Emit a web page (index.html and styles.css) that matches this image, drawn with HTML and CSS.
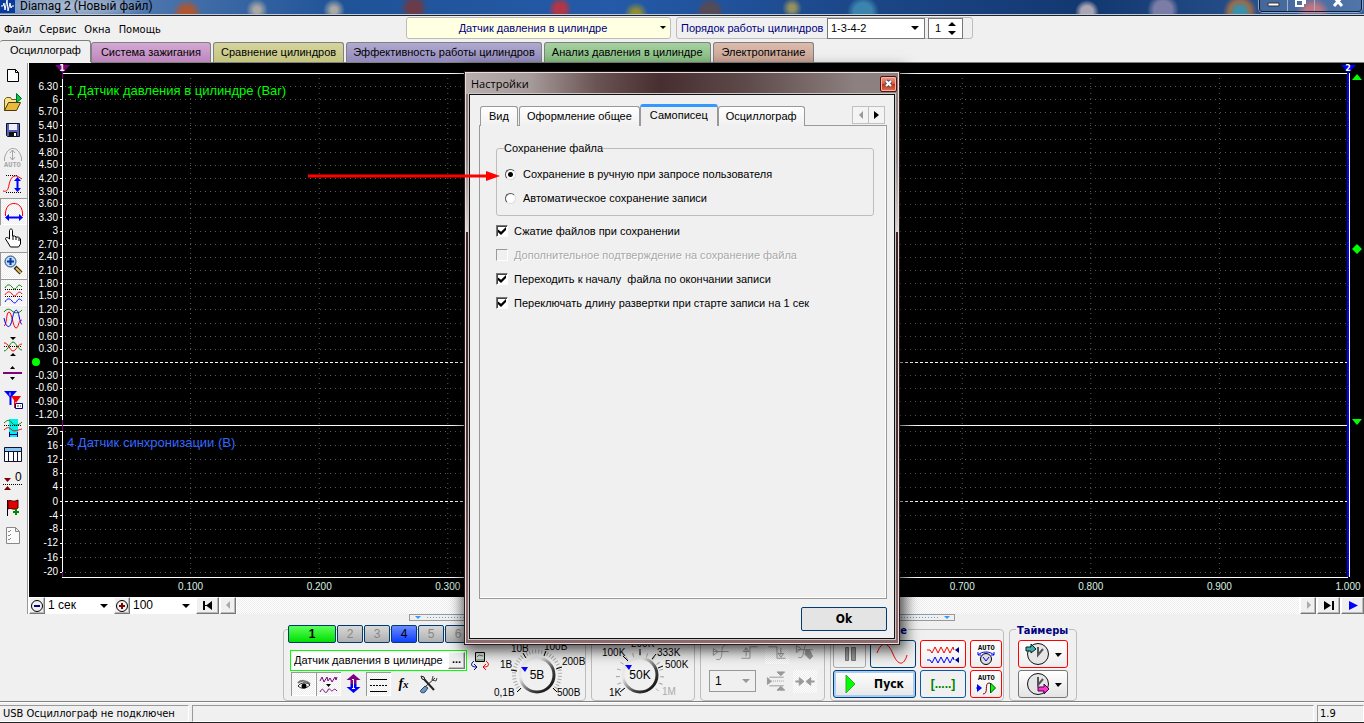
FILE: index.html
```html
<!DOCTYPE html>
<html lang="ru">
<head>
<meta charset="utf-8">
<title>Diamag 2 (Новый файл)</title>
<link rel="stylesheet" href="styles.css">
</head>
<body>
<div class="app">
  <header class="titlebar">
    <svg class="app-icon" width="15" height="13" viewBox="0 0 15 13"><rect width="15" height="13" fill="#0a3a9a"/><path d="M1 6h2l1-3 1 7 2-10 1 11 2-8 1 5 1-2h2" fill="none" stroke="#fff"/></svg>
    <span class="title-text">Diamag 2 (Новый файл)</span>
    <div class="window-buttons">
      <button aria-label="Свернуть"><svg width="26" height="11"><path d="M8 3h11v3H8z" fill="#fff" stroke="#333"/></svg></button>
      <button aria-label="Развернуть"><svg width="26" height="11"><path d="M8 0h7v6H8zM17 0v4" fill="none" stroke="#fff" stroke-width="2"/></svg></button>
      <button aria-label="Закрыть" class="wide"><svg width="46" height="11"><path d="M19-3l8 9M27-3l-8 9" stroke="#fff" stroke-width="3"/></svg></button>
    </div>
  </header>

  <div class="menubar">
    <nav class="menu">
      <button>Файл</button><button>Сервис</button><button>Окна</button><button>Помощь</button>
    </nav>
    <span class="combo sensor"><select aria-label="Датчик"><option>Датчик давления в цилиндре</option></select></span>
    <div class="order">
      <label for="order">Порядок работы цилиндров</label>
      <span class="combo order-combo"><select id="order"><option>1-3-4-2</option></select></span>
      <span class="spin"><input type="text" value="1" aria-label="Цилиндр"></span>
    </div>
  </div>

  <div class="tabs">
    <button class="tab current">Осциллограф</button>
    <button class="tab violet">Система зажигания</button>
    <button class="tab olive">Сравнение цилиндров</button>
    <button class="tab indigo">Эффективность работы цилиндров</button>
    <button class="tab green">Анализ давления в цилиндре</button>
    <button class="tab rose">Электропитание</button>
  </div>

  <main class="main">
    <div class="tools">
      <button aria-label="Новый"><svg viewBox="0 0 27 27"><path d="M7.500 6.500h8l3 3v9h-11z" fill="#fff" stroke="#000"/><path d="M15.500 6.500v3h3" fill="none" stroke="#000"/></svg></button>
      <button aria-label="Открыть"><svg viewBox="0 0 27 27"><path d="M4.500 20.500V9.500l2-2h4l1 2h6v3" fill="#f3e48a" stroke="#6b5a10"/><path d="M4.500 20.500l4-8h12l-4 8z" fill="#e8b93c" stroke="#4a3b00"/><path d="M16.500 3.500l5 5-5 4z" fill="#0c4" stroke="#063"/></svg></button>
      <button aria-label="Сохранить"><svg viewBox="0 0 27 27"><path d="M6.500 6.500h13v13h-12l-1-1z" fill="#5560b8" stroke="#112"/><path d="M9 7h8v6H9z" fill="#eef"/><path d="M9 15h8v4H9z" fill="#111"/><path d="M14 16h2v3h-2z" fill="#fff"/></svg></button>
      <button aria-label="Авто"><svg viewBox="0 0 27 27"><path d="M4.500 17v-3C6 8 9 4.500 13 4.500S20 8 21.500 14v3M12.500 6v10M10 9l2.500-3L15 9M10 13l2.500 3 2.500-3" fill="none" stroke="#a5a5a5"/><text x="4" y="23" class="tiny" fill="#a5a5a5">AUTO</text></svg></button>
      <button aria-label="Масштаб по вертикали"><svg viewBox="0 0 27 27"><path d="M6 4.500h12M6 21.500h15" stroke="#000" stroke-dasharray="1 1"/><path d="M3 20c4 1 5-1 6-6s3-10 8-9l5 3" fill="none" stroke="#f00"/><path d="M17.500 8v10" stroke="#00f" stroke-width="2"/><path d="M14 10l3.500-4 3.500 4zM14 17l3.500 4 3.500-4z" fill="#00f"/></svg></button>
      <button class="pressed" aria-label="Масштаб по горизонтали"><svg viewBox="0 0 27 27"><path d="M5.500 18v-3C6 9 9 5.500 14 5.500S22 9 22.500 15v3" fill="none" stroke="#f00"/><path d="M8 19.500h12" stroke="#00f" stroke-width="2"/><path d="M9 16l-4 3.500L9 23zM19 16l4 3.500-4 3.500z" fill="#00f"/></svg></button>
      <button aria-label="Рука"><svg viewBox="0 0 27 27"><path d="M9.500 14V5.500c0-2 3-2 3 0V11l2 0 2 1 2 0 2 2v5l-2 3h-8l-3-5-2-3c0-2 2-2 4 0zM13 11v4M16 12v3M19 13v3" fill="#fff" stroke="#000"/></svg></button>
      <button class="pressed" aria-label="Лупа"><svg viewBox="0 0 27 27"><path d="M15 15l6 6" stroke="#222" stroke-width="4"/><path d="M16 16l5 5" stroke="#f0c040" stroke-width="2"/><circle cx="10.500" cy="9.500" r="5.500" fill="#b7ddff" stroke="#246"/><path d="M7 9.500h7M10.500 6v7" stroke="#1030a0" stroke-width="2"/></svg></button>
      <button class="pressed" aria-label="Все каналы"><svg viewBox="0 0 27 27"><path d="M5 9c2-4 5-4 7-1s4 2 5 0 3-3 5 0" fill="none" stroke="#008000"/><path d="M5 10.500h18M5 17.500h18" stroke="#000" stroke-dasharray="1 1"/><path d="M5 16c2-4 5-4 7-1s4 2 5 0 3-3 5 0" fill="none" stroke="#f00"/><path d="M5 23c2-4 5-4 7-1s4 2 5 0 3-3 5 0" fill="none" stroke="#00f"/></svg></button>
      <button aria-label="Наложение"><svg viewBox="0 0 27 27"><path d="M4 6c3-4 6-3 8-1s7 3 10-1" fill="none" stroke="#008000"/><path d="M4 20c3-1 2-14 5-14s4 16 7 16 2-8 6-8" fill="none" stroke="#f00"/><path d="M4 12c2 10 6 12 8 2s5-14 7-4 3 8 3 8" fill="none" stroke="#00f"/></svg></button>
      <button aria-label="Симметрия"><svg viewBox="0 0 27 27"><path d="M4 13.500h18" stroke="#000" stroke-dasharray="1 1"/><path d="M4 10c4-1 6 8 9 8s5-7 9-7" fill="none" stroke="#f00"/><path d="M4 18c4 0 6-9 9-9s5 8 9 8" fill="none" stroke="#080"/><path d="M10 4h6l-3 3zM10 23h6l-3-3z"/></svg></button>
      <button aria-label="Разделитель"><svg viewBox="0 0 27 27"><path d="M3 13h19" stroke="#800080" stroke-width="2"/><path d="M10 9h5l-2.500-3zM10 17h5l-2.500 3z"/></svg></button>
      <button aria-label="Маркеры"><svg viewBox="0 0 27 27"><path d="M4 4h13l-6.500 7z" fill="#00f"/><path d="M10.500 6v12" stroke="#00f" stroke-width="2"/><path d="M10 5.500v3" stroke="#fff"/><path d="M11 9h10l-5 7z" fill="#f00"/><path d="M14.500 12v9" stroke="#f00"/><path d="M15.500 16.500h7v5h-7z" fill="#fff" stroke="#008"/><path d="M17 19h2M20 19h1" stroke="#333"/></svg></button>
      <button aria-label="Участок"><svg viewBox="0 0 27 27"><path d="M9 5h9v18H9z" fill="#0ee"/><path d="M4 9c4-4 6-3 8 0s6 3 10-1" fill="none" stroke="#080"/><path d="M4 11.500h18" stroke="#000" stroke-dasharray="1 1"/><path d="M4 16c4-4 6-2 8 0s6 0 10-1" fill="none" stroke="#f00"/><path d="M9 20.500h9M9.500 18v5M17.500 18v5" stroke="#000080"/></svg></button>
      <button aria-label="Таблица"><svg viewBox="0 0 27 27"><path d="M4.500 6.500h17v14h-17z" fill="#fff" stroke="#113"/><path d="M5 7h16v3H5z" fill="#8bc8f0"/><path d="M4 10.500h18M8.500 10v10M13.500 10v10M17.500 10v10" stroke="#113"/></svg></button>
      <button aria-label="Ноль"><svg viewBox="0 0 27 27"><path d="M3 16.500h19" stroke="#000" stroke-dasharray="1 1"/><path d="M4 10h7l-3.500 4zM4 22h7L7.500 18z" fill="#800000"/><text x="15" y="13" class="zero">0</text></svg></button>
      <button aria-label="Флаг"><svg viewBox="0 0 27 27"><path d="M7.500 5v16" stroke="#000"/><path d="M8 6c3-2 4 2 10-1v8c-5 3-7-1-10 1z" fill="#e00000" stroke="#400"/><path d="M13 17h6M16 14v6" stroke="#080" stroke-width="2"/></svg></button>
      <button aria-label="Отчёт"><svg viewBox="0 0 27 27"><path d="M6.500 5.500h9l4 4v12h-13zM15.500 5.500v4h4" fill="#fafafa" stroke="#888"/><path d="M8 9l1 1 2-2M8 13l1 1 2-2M8 17l1 1 2-2" fill="none" stroke="#888"/></svg></button>
    </div>
    <div class="scope">
      <svg class="chart" id="chart" role="img" aria-label="Осциллограмма"></svg>
      <div class="scroll">
        <button class="raised" aria-label="Уменьшить"><svg width="14" height="14"><circle cx="7" cy="7" r="5.500" fill="none" stroke="#000"/><path d="M4 7h6" stroke="#000080" stroke-width="2"/></svg></button>
        <span class="combo sweep"><select aria-label="Развертка"><option>1 сек</option></select></span>
        <button class="raised" aria-label="Увеличить"><svg width="14" height="14"><circle cx="7" cy="7" r="5.500" fill="none" stroke="#000"/><path d="M4 7h6M7 4v6" stroke="#800000" stroke-width="2"/></svg></button>
        <span class="combo zoomlevel"><select aria-label="Масштаб"><option>100</option></select></span>
        <button class="raised mid" aria-label="В начало"><svg width="12" height="9"><path d="M1 0h2v9H1zM10 0v9L4 4.500zM3 4h5v1H3z"/></svg></button>
        <button class="raised" aria-label="Назад"><svg width="7" height="9"><path d="M5 0v8L1 4z" fill="#aaa"/></svg></button>
        <span class="track"></span>
        <button class="raised" aria-label="Вперёд"><svg width="7" height="9"><path d="M2 0v8l4-4z" fill="#aaa"/></svg></button>
        <button class="raised mid" aria-label="В конец"><svg width="12" height="9"><path d="M9 0h2v9H9zM1 0v9l7-4.500z"/></svg></button>
        <button class="raised mid" aria-label="Пуск развертки"><svg width="12" height="9"><path d="M2 0v9l9-4.500z" fill="#00f"/></svg></button>
      </div>
    </div>
  </main>

  <div class="splitter"><div class="grip"></div></div>

  <section class="controls">
    <div class="group channel">
      <div class="channel-left">
        <div class="channels">
          <button class="on">1</button><button>2</button><button>3</button><button class="blue">4</button><button>5</button><button>6</button>
        </div>
        <div class="sensor-name"><input type="text" value="Датчик давления в цилиндре" aria-label="Датчик канала"><button class="raised">...</button></div>
        <div class="modes">
          <button class="pressed" aria-label="Видимость"><svg viewBox="0 0 25 24"><path d="M7 11c3-3 8-3 12 1" fill="none" stroke="#777" stroke-width="2"/><path d="M7 14c3 3 8 3 12-1-3-3-9-3-12 1z" fill="#fff" stroke="#222"/><circle cx="13" cy="14" r="2.500"/></svg></button>
          <button class="pressed" aria-label="Сглаживание"><svg viewBox="0 0 25 24"><path d="M4 9l2-4 2 5 3-5 1 4 2-3 2 4 3-5 1 3 1-3" fill="none" stroke="#800080"/><path d="M10 12h5l-2.500 3z"/><path d="M4 20c2-4 3-3 4-1s3 2 4-1 3 1 4 1 2-4 5 0" fill="none" stroke="#800080"/></svg></button>
          <button aria-label="Инверсия"><svg viewBox="0 0 25 24"><path d="M12.500 2l7 6h-4v4h-6V8h-4z" fill="#800080"/><path d="M12.500 21l7-6h-4v-3h-6v3h-4z" fill="#00f"/><path d="M12.500 7v9M11 16.500h3M11 7.500h2" stroke="#fff"/></svg></button>
          <button class="pressed" aria-label="Линии"><svg viewBox="0 0 25 24"><path d="M4 7.500h17M4 19.500h17" stroke="#000"/><path d="M4 13.500h17" stroke="#000" stroke-dasharray="2 1"/></svg></button>
          <button aria-label="Функция"><i class="fx">f<small>x</small></i></button>
          <button aria-label="Настройки канала"><svg viewBox="0 0 25 24"><path d="M7 6l11 12" stroke="#222" stroke-width="2"/><path d="M5 4l3 1 1 3-3-1zM19 6L9 15" stroke="#222" fill="#ddd"/><path d="M17 4l-1 4 4 1 1-3" fill="none" stroke="#444"/><path d="M5 18l4-4 3 2-3 4c-2 2-6 0-4-2z" fill="#6d94cc" stroke="#245"/></svg></button>
        </div>
      </div>
      <button class="swap" aria-label="Заменить"><svg width="20" height="22"><path d="M5.500 2.500h9v9h-9z" fill="#ddd" stroke="#000"/><path d="M7 7l2-2 4 1M6 10h8" stroke="#484" fill="none"/><path d="M4 11c-4 3-3 6 2 6M4 14l3 3-3 3" fill="none" stroke="#008"/><path d="M16 11c4 3 3 6-2 6M16 14l-3 3 3 3" fill="none" stroke="#f00"/></svg></button>
      <svg class="knob" width="96" height="60">
        <defs><linearGradient id="rim" x1="0" y1="0" x2="1" y2="1"><stop offset=".3" stop-color="#e8e8e8"/><stop offset=".65" stop-color="#444"/><stop offset="1"/></linearGradient></defs>
        <path d="M29 50A23 23 0 1 1 63 50" fill="none" stroke="#aaa" stroke-width="4" stroke-dasharray="1 2"/>
        <path d="M30 48l-4 4M26 31l-6-1M35 18l-3-5M53 16l2-5M65 29l6-2M62 48l4 4" stroke="#000"/>
        <circle cx="46" cy="35" r="17" fill="#f0f0f0" stroke="url(#rim)" stroke-width="3"/><path d="M30 27h7l-3 5z" fill="#00f"/>
        <text x="46" y="39" class="value">5В</text>
        <text x="3" y="56">0,1В</text><text x="9" y="28">1В</text><text x="20" y="12">10В</text><text x="53" y="10">100В</text><text x="71" y="25">200В</text><text x="66" y="56">500В</text>
      </svg>
    </div>

    <div class="group">
      <svg class="knob" width="102" height="60">
        <path d="M31 50A22 22 0 1 1 65 50" fill="none" stroke="#aaa" stroke-width="4" stroke-dasharray="1 6"/>
        <path d="M33 48l-5 4M36 21l-5-5M48 15v-6M60 19l4-5M66 28l5-2" stroke="#000"/>
        <circle cx="48" cy="35" r="17" fill="#f0f0f0" stroke="url(#rim)" stroke-width="3"/><path d="M33 25h7l-3 5z" fill="#00f"/>
        <text x="48" y="39" class="value">50K</text>
        <text x="10" y="16">100K</text><text x="39" y="7">200K</text><text x="65" y="16">333K</text><text x="73" y="28">500K</text><text x="17" y="56">1K</text><text x="70" y="55" class="off">1M</text>
      </svg>
    </div>

    <div class="group trigger">
      <button aria-label="Запуск"><svg viewBox="0 0 24 24"><path d="M4 8l5 3-5 4zM4 11h16M7 19c5 2 6-3 6-8s2-8 6-7"/></svg></button>
      <button aria-label="Фронт"><svg viewBox="0 0 24 24"><path d="M4 18h9V6h8M9 16V8M6 11l3-4 3 4z"/></svg></button>
      <button class="hatch" aria-label="Спад"><svg viewBox="0 0 24 24"><path d="M3 6h9v12h9M16 7v8M13 13l3 4 3-4z"/></svg></button>
      <button aria-label="Ручной"><svg viewBox="0 0 24 24"><path d="M3 5l5 3-5 4zM4 9h16M5 17c5 2 5-3 6-8s3-7 7-6"/><path class="solid" d="M13 9l4 1 3 6-3 3-5-5z"/></svg></button>
      <span class="combo off-combo"><select aria-label="Канал запуска" disabled><option>1</option></select></span>
      <button aria-label="Уровень"><svg viewBox="0 0 24 24"><path d="M4 7.500h15M4 16.500h15"/><path stroke-dasharray="1 1" d="M6 11.500h14"/><path class="solid" d="M2 8l4 4-4 3zM12 2h8l-4 4zM12 21h8l-4-4z"/></svg></button>
      <button class="hatch" aria-label="Сжать"><svg viewBox="0 0 24 24"><path d="M2 12h6M22 12h-6" stroke-width="2"/><path class="solid" d="M6 8l5 4-5 4zM18 8l-5 4 5 4z"/></svg></button>
    </div>

    <div class="group run">
      <h2>Управление</h2>
      <button class="box" aria-label="Пауза"><svg width="20" height="20"><path d="M5.500 3.500h3v13h-3zM11.500 3.500h4v13h-4z" fill="#999" stroke="#777"/></svg></button>
      <button class="box navy" aria-label="Синус"><svg width="36" height="22"><path d="M2 10C7-3 13-1 18 11s11 12 14 1" fill="none" stroke="#f00"/></svg></button>
      <button class="box red" aria-label="Непрерывно"><svg width="36" height="22"><path d="M2 7h3l2 3 3-6 3 6 3-6 3 6 3-6 3 6 3-6 1 3" fill="none" stroke="#f00"/><path d="M34 4v6l-4-3z" fill="#008"/><path d="M2 17h3l2 3 3-6 3 6 3-6 3 6 3-6 3 6 3-6 1 3" fill="none" stroke="#00f"/><path d="M34 14v6l-4-3z" fill="#008"/></svg></button>
      <button class="box red" aria-label="Авто усиление"><svg width="24" height="24"><text x="4" y="8" class="auto">AUTO</text><path d="M4 13c4-4 12-4 16 0M4 10v3h3M20 10v3h-3" fill="none" stroke="#00f"/><circle cx="12" cy="17" r="5.500" fill="#ddd" stroke="#000"/><path d="M9 15l3 4 3-4" fill="none" stroke="#00f"/></svg></button>
      <button class="start"><svg width="11" height="20"><path d="M1 1v18l9-9z" fill="#0f0" stroke="#3a3" /></svg><b>Пуск</b></button>
      <button class="box azure"><b>[.....]</b></button>
      <button class="box red" aria-label="Авто запуск"><svg width="24" height="24"><text x="4" y="8" class="auto">AUTO</text><path d="M2 16h5M9 22c6 0 1-11 6-11 4 0 1 7 5 6" fill="none" stroke="#800000"/><path d="M3 12l5 4-5 4z" fill="#00f"/><path d="M16.500 11v10l5-5z" fill="#0f0" stroke="#050"/></svg></button>
    </div>

    <div class="group timers">
      <h2>Таймеры</h2>
      <button class="box red" aria-label="Таймер запуска"><svg width="38" height="24"><circle cx="14" cy="12" r="10.500" fill="#e6e6e6" stroke="#111"/><path d="M14 5v8l5-6" fill="none" stroke="#555" stroke-width="2"/><path d="M2 5h5V2l5 5-5 4V9H2z" fill="#4aa" stroke="#022"/><path d="M31 11h7l-4 4z"/></svg></button>
      <button class="box gray" aria-label="Таймер останова"><svg width="38" height="24"><circle cx="14" cy="12" r="10.500" fill="#e6e6e6" stroke="#111"/><path d="M14 5v8l5-6" fill="none" stroke="#555" stroke-width="2"/><path d="M14 15h6v-3l5 5-5 5v-3h-6z" fill="#f3c" stroke="#404"/><path d="M31 11h7l-4 4z"/></svg></button>
    </div>
  </section>

  <footer class="status"><span class="cell first">USB Осциллограф не подключен</span><span class="cell"></span><span class="cell last">1.9</span></footer>
</div>

<section class="dialog" role="dialog" aria-label="Настройки">
  <header class="dialog-title"><span>Настройки</span><button aria-label="Закрыть окно"><svg width="9" height="9"><path d="M2 2l5 5M7 2L2 7" stroke="#456" stroke-width="4"/><path d="M2 2l5 5M7 2L2 7" stroke="#fff" stroke-width="2"/></svg></button></header>
  <div class="client">
    <div class="dialog-tabs">
      <button>Вид</button><button>Оформление общее</button><button class="current">Самописец</button><button>Осциллограф</button>
      <span class="pager"><button aria-label="Назад по вкладкам"><svg width="5" height="8"><path d="M5 0v8L1 4z" fill="#999"/></svg></button><button aria-label="Вперёд по вкладкам"><svg width="5" height="8"><path d="M0 0v8l5-4z"/></svg></button></span>
    </div>
    <div class="page">
      <fieldset>
        <legend>Сохранение файла</legend>
        <label><input type="radio" name="save" checked>Сохранение в ручную при запросе пользователя</label>
        <label><input type="radio" name="save">Автоматическое сохранение записи</label>
      </fieldset>
      <label><input type="checkbox" checked>Сжатие файлов при сохранении</label>
      <label class="disabled"><input type="checkbox" disabled>Дополнительное подтверждение на сохранение файла</label>
      <label><input type="checkbox" checked>Переходить к началу&nbsp; файла по окончании записи</label>
      <label><input type="checkbox" checked>Переключать длину развертки при старте записи на 1 сек</label>
    </div>
    <div class="actions"><button>Ok</button></div>
  </div>
  <svg class="arrow" width="192" height="12"><path d="M0 6h180" stroke="#f00" stroke-width="3"/><path d="M178 1l14 5-14 5z" fill="#f00"/></svg>
</section>
<script src="chart.js"></script>
</body>
</html>
```
FILE: styles.css
```css
* { box-sizing: border-box; }
body {
  margin: 0;
  background: #f0f0f0;
  color: #000;
  font: 11px/13px "Liberation Sans", Arial, sans-serif;
}
button, input, select { font: inherit; color: inherit; margin: 0; padding: 0; border-radius: 0; }
button { border: 0; background: none; }
svg { display: block; }

.app { display: flex; flex-direction: column; min-height: 100vh; border-bottom: 1px solid #222; }

/* Window caption */
.titlebar {
  display: flex;
  align-items: flex-start;
  height: 16px;
  overflow: hidden;
  border-bottom: 1px solid #222;
  box-shadow: inset 0 -1px #b8cbe0;
  background:
    radial-gradient(ellipse 80px 14px at 70px 6px, #b9c6d8dd, #a9b8cf99 60%, transparent),
    radial-gradient(circle at 187px 14px, #b0562f 6px, transparent 15px),
    radial-gradient(circle at 257px 10px, #a9a8a5 3px, transparent 11px),
    radial-gradient(circle at 334px 10px, #a9a8a5 3px, transparent 11px),
    radial-gradient(circle at 414px 8px, #6a3b48 6px, transparent 14px),
    radial-gradient(circle at 560px 9px, #b33646 5px, transparent 12px),
    radial-gradient(circle at 636px 14px, #8c8d35 4px, transparent 12px),
    radial-gradient(circle at 710px 12px, #544a58 8px, transparent 14px),
    radial-gradient(circle at 792px 8px, #94915f 3px, transparent 10px),
    radial-gradient(circle at 863px 12px, #3b84ae 9px, transparent 16px),
    radial-gradient(circle at 1087px 12px, #aba5b4 6px, transparent 12px),
    radial-gradient(circle at 1163px 10px, #7b7da6 9px, transparent 16px),
    radial-gradient(circle at 1240px 12px, #3a90a8 5px, #9a6a4a 11px, transparent 17px),
    radial-gradient(circle at 1313px 14px, #b8606e 8px, transparent 17px),
    linear-gradient(90deg, #6f8fbd, #1f5397 25%, #245aa8 45%, #1b4585 65%, #123870 80%, #35609c);
}
.title-text { margin-left: 5px; font: 12px/12px Roboto, sans-serif; }
.window-buttons { display: flex; margin-left: auto; margin-right: 2px; height: 12px; border: 1px solid #0b1d3a; border-top: 0; border-radius: 0 0 4px 4px; box-shadow: 0 0 0 1px #8fa6c6; }
.window-buttons button { width: 27px; background: #ffffff22; overflow: hidden; }
.window-buttons button + button { border-left: 1px solid #9fb2cc; }
.window-buttons .wide { width: 47px; }

/* Combo boxes */
.combo { position: relative; display: block; background: #fff; }
.combo select { display: block; width: 100%; height: 100%; padding: 0 14px 0 3px; border: 0; background: transparent; appearance: none; opacity: 1; }
.combo::after { content: ""; position: absolute; right: 5px; top: calc(50% - 2px); border: 4px solid transparent; border-top-color: #000; border-bottom: 0; pointer-events: none; }

/* Menu row */
.menubar { display: flex; align-items: center; height: 24px; }
.menu { display: flex; gap: 8px; width: 406px; padding: 3px 0 0 4px; font: 11px/14px "DejaVu Sans Condensed", Tahoma, sans-serif; }
.sensor { width: 265px; height: 22px; margin-right: 5px; border: 1px solid #bdbdbd; border-radius: 3px; background: #ffffe1; color: #000080; }
.sensor select { text-align: center; text-align-last: center; }
.sensor::after { border-width: 3px; border-bottom: 0; right: 4px; }
.order { display: flex; align-items: center; height: 22px; width: 297px; padding-left: 4px; gap: 3px; border: 1px solid #bdbdbd; border-radius: 3px; color: #000080; }
.order label { width: 143px; white-space: nowrap; }
.order-combo, .spin { height: 21px; border: 1px solid #777; background: #fff; color: #000; }
.order-combo { width: 98px; }
.spin { position: relative; width: 35px; }
.spin input { width: 20px; height: 100%; padding-left: 6px; border: 0; background: none; }
.spin::before, .spin::after { content: ""; position: absolute; right: 6px; border: 4px solid transparent; }
.spin::before { top: 3px; border-top: 0; border-bottom-color: #000; }
.spin::after { bottom: 3px; border-bottom: 0; border-top-color: #000; }

/* Section tabs */
.tabs { display: flex; align-items: flex-end; gap: 2px; height: 23px; border-bottom: 1px solid #808080; white-space: nowrap; }
.tab { height: 20px; padding: 0 7px; border: 1px solid #808080; border-bottom: 0; border-radius: 3px 3px 0 0; }
.tab.current { height: 22px; padding: 0 9px 3px 10px; margin-right: -2px; background: #f0f0f0; box-shadow: 0 1px #f0f0f0; border-left: 0; }
.violet { padding: 0 9px; background: linear-gradient(#d4a9d4, #bd86bd); }
.olive { background: linear-gradient(#d5d59e, #c4c480); }
.indigo { padding: 0 6px; background: linear-gradient(#b0a9d0, #928abb); }
.green { background: linear-gradient(#a6d0a0, #84bc80); }
.rose { padding: 0 8px; background: linear-gradient(#dcbcae, #c8a292); }

/* Tool column and oscilloscope */
.main { display: flex; flex: 1; }
.tools { width: 29px; border-right: 1px solid #fff; box-shadow: inset -1px 0 #999; padding-bottom: 3px; }
.tools button { display: block; width: 27px; height: 27px; }
.tools svg { width: 27px; height: 27px; }
.pressed, .hatch, .track { background: repeating-conic-gradient(#fff 0 25%, #ededed 0 50%) 0 0 / 2px 2px; }
.pressed { box-shadow: inset 1px 1px #999, inset -1px -1px #fff; }
.tiny { font: bold 7px "Liberation Mono", monospace; }
.zero { font: 12px "Liberation Sans", sans-serif; }
.scope { display: flex; flex-direction: column; flex: 1; min-width: 0; }
.chart { flex: 1; width: 100%; min-height: 0; background: #000; }
.plot { width: calc(100% - 49px); height: calc(100% - 30px); overflow: visible; }
.marker { overflow: visible; }
.grid { stroke: #5a5a5a; stroke-dasharray: 1 4; }
.zero-line { stroke: #fff; stroke-dasharray: 3 2; }
.axis { stroke: #fff; }
.tick-label { fill: #fff; font-size: 10px; text-anchor: end; }
.time-label { fill: #d8f0e0; font-size: 10px; text-anchor: middle; }
.channel-label { font-size: 13px; }
.flag { fill: #fff; font: bold 8px "DejaVu Sans", sans-serif; text-anchor: middle; }

.scroll { display: flex; height: 17px; gap: 1px; background: #fff; }
.raised { display: flex; align-items: center; justify-content: center; width: 16px; background: #f0f0f0; border: 1px solid; border-color: #fff #777 #777 #fff; box-shadow: inset -1px -1px #bbb; }
.raised.mid { width: 23px; }
.sweep { width: 67px; }
.zoomlevel { width: 64px; }
.scroll select { padding-left: 2px; font-size: 12px; }
.track { flex: 1; }

/* Splitter */
.splitter { display: flex; justify-content: center; height: 7px; }
.grip { position: relative; width: 40%; padding: 0 15px; border: 1px solid #999; background: linear-gradient(90deg, #4aa3f0 33%, transparent 0) 14px 2px / 3px 1px repeat-x content-box; background-origin: content-box; }
.grip::before, .grip::after { content: ""; position: absolute; top: 1px; border: 3px solid transparent; border-top-color: #3399ff; border-bottom: 0; }
.grip::before { left: 5px; }
.grip::after { right: 4px; }

/* Control groups */
.controls { display: flex; justify-content: center; gap: 5px; padding: 8px 4px 0 0; }
.group { position: relative; display: flex; height: 72px; border: 1px solid #bdbdbd; border-radius: 4px; padding-top: 10px; padding-left: 1px; }
.group h2 { position: absolute; left: 6px; top: -6px; margin: 0; padding: 0 1px; background: #f0f0f0; color: #000080; font: bold 11px/13px "DejaVu Sans Condensed", Tahoma, sans-serif; }
.channel { width: 303px; padding: 0 0 0 4px; }
.channel-left { flex: none; width: 180px; margin-top: -5px; }
.channels { display: flex; gap: 1px; }
.channels button { flex: none; width: 26px; height: 18px; border: 1px solid #003c74; border-radius: 2px; background: linear-gradient(#d8d8d8, #b0b0b0); color: #888; font-size: 12px; }
.channels .on { width: 48px; background: linear-gradient(#5cff5c, #00e000); color: #000; font-weight: bold; }
.channels .blue { background: linear-gradient(#6a8cff, #1040ff); color: #000; }
.sensor-name { display: flex; height: 21px; width: 177px; margin: 7px 0 1px 2px; border: 1px solid #0f0; background: #fff; }
.sensor-name input { flex: 1; min-width: 0; padding-left: 3px; border: 0; background: none; }
.sensor-name button { width: 17px; margin: 1px; line-height: 8px; padding-bottom: 4px; font-weight: bold; }
.modes { display: flex; padding-left: 3px; }
.modes button { width: 25px; height: 24px; }
.modes svg { width: 25px; height: 24px; }
.fx { font: italic bold 14px "Liberation Serif", serif; }
.fx small { font-size: 11px; }
.swap { flex: none; width: 20px; height: 22px; margin: 20px 0 0 2px; }
.knob { flex: none; margin-left: -1px; overflow: visible; font-size: 10px; }
.channel .knob { margin: 10px 0 0 1px; }
.knob .value { font-size: 12px; text-anchor: middle; }
.knob .off { fill: #aaa; }
.trigger { width: 125px; padding: 11px 4px 4px 8px; display: grid; grid-template-columns: repeat(4, 24px); gap: 6px 4px; align-content: start; }
.trigger button { width: 24px; height: 23px; }
.trigger svg { width: 24px; height: 23px; fill: none; stroke: #999; }
.trigger .solid { fill: #999; }
.off-combo { grid-column: span 2; width: 47px; height: 22px; border: 1px solid #999; background: #f0f0f0; }
.off-combo::after { border-top-color: #999; }
.off-combo select { padding-left: 5px; color: #000; font-size: 12px; }
.run { width: 174px; display: grid; grid-template-columns: 33px 46px 46px 32px; grid-auto-rows: 28px; gap: 2px 4px; padding-left: 2px; }
.box, .start { display: flex; align-items: center; justify-content: center; overflow: hidden; border: 1px solid #aaa; border-radius: 3px; }
.box.navy { border-color: #003c74; }
.box.red { border-color: #f00; background: linear-gradient(#fff, #eee); }
.box.gray { border-color: #777; background: linear-gradient(#fff, #e4e4e4); }
.box.azure { border-color: #0a58a8; color: #008000; font-size: 12px; }
.start { grid-column: span 2; gap: 18px; border-color: #003c74; box-shadow: inset 0 0 0 2px #a8ccf4; background: linear-gradient(#fff, #e6e6e6); font: bold 12px "DejaVu Sans Condensed", Tahoma, sans-serif; }
.auto { font: bold 7px "Liberation Mono", monospace; }
.timers { width: 68px; flex-direction: column; gap: 2px; padding-left: 8px; }
.timers .box { width: 50px; height: 28px; }

/* Status bar */
.status { display: flex; height: 21px; gap: 3px; padding-top: 3px; border-top: 1px solid #808080; font: 11px/15px "DejaVu Sans Condensed", Tahoma, sans-serif; box-shadow: inset 0 1px #fff; }
.cell { flex: 1; height: 17px; border: 1px solid; border-color: #999 #fff #fff #999; padding-left: 2px; }
.cell.first { flex: none; width: 189px; border-left: 0; padding-left: 3px; }
.cell.last { flex: none; width: 47px; }

/* Settings dialog */
.dialog {
  position: absolute;
  top: 71px;
  left: calc(50% - 218px);
  width: 436px;
  padding: 1px 5px 5px;
  border: 1px solid #2a1a1c;
  box-shadow: inset 0 0 0 1px #e6dede, 2px 2px 14px 3px #000000b8;
  background: linear-gradient(#8c7e7e 5%, #94898a 15%, #ddd5d5 28%, #3d2528 28%, #4a3033 65%, #8c6a6d 92%);
}
.dialog-title { display: flex; align-items: center; justify-content: space-between; height: 21px; margin: 0 -4px; padding: 0 1px 0 5px; background: linear-gradient(90deg, #b8aeae, #a69a9a 15%, #6b5454 30%, #472e30 45%, #5e4a4a 65%, #8d8080 90%); font: 11px/14px "Open Sans", sans-serif; }
.dialog-title button { display: flex; align-items: center; justify-content: center; width: 17px; height: 16px; border: 1px solid #54100c; border-radius: 2px; background: linear-gradient(#eda08f, #d8563c 50%, #c03014 50%, #e0704c); box-shadow: inset 0 0 0 1px #f4b5a8; }
.client { background: #f0f0f0; border: 1px solid #111; box-shadow: 0 0 0 1px #cfc6c6; padding: 9px 7px 7px 9px; margin: 0 -1px; }
.dialog-tabs { display: flex; align-items: flex-end; height: 22px; margin-bottom: -1px; padding-left: 1px; position: relative; }
.dialog-tabs > button { height: 20px; padding: 0 7px; border: 1px solid #999; border-bottom: 0; border-radius: 3px 3px 0 0; background: linear-gradient(#fff, #f0f0f0); margin-right: 1px; }
.dialog-tabs > button:first-child { padding: 0 8px; }
.dialog-tabs > .current { height: 22px; padding: 0 9px 3px; border-top: 3px solid #3399ff; background: #f0f0f0; margin: 0 0 0 -1px; }
.pager { display: flex; margin-left: auto; margin-right: 2px; align-self: flex-start; }
.pager button { display: flex; align-items: center; justify-content: center; width: 17px; height: 18px; border: 1px solid #c0c0c0; margin-left: -1px; background: #f4f4f4; margin-top: 2px; }
.page { min-height: 474px; padding: 16px 12px 0 16px; border: 1px solid #999; box-shadow: inset -1px -1px #fff; }
fieldset { height: 74px; margin: 0 0 3px; padding: 7px 0 0 8px; border: 1px solid #bdbdbd; border-radius: 3px; }
legend { padding: 0; margin-left: -1px; }
.page label { display: flex; align-items: center; height: 24px; gap: 6px; white-space: nowrap; }
fieldset label { height: 25px; gap: 5px; }
.page input { appearance: none; width: 12px; height: 12px; background: #fff; border: 1px solid; border-color: #777 #fff #fff #777; box-shadow: inset 1px 1px #444; }
.page input[type="radio"] { width: 11px; height: 11px; border-radius: 50%; box-shadow: none; border-color: #555 #ddd #ddd #555; margin-right: 1px; }
.page input[type="radio"]:checked { background: radial-gradient(circle, #000 2px, #fff 3px); }
.page input[type="checkbox"]:checked::before { content: ""; display: block; width: 8px; height: 8px; margin: 1px; background: #000; clip-path: polygon(0 30%, 38% 60%, 100% 0, 100% 38%, 38% 100%, 0 65%); }
.page .disabled { color: #a8a8a8; text-shadow: 1px 1px #fff; }
.page .disabled input { background: #f0f0f0; border-color: #999 #fff #fff #999; box-shadow: none; }
.actions { display: flex; justify-content: flex-end; padding-top: 8px; }
.actions button { width: 86px; height: 24px; border: 1px solid #003c74; border-radius: 2px; background: #e4e4e4; font: bold 12px "DejaVu Sans Condensed", Tahoma, sans-serif; }
.arrow { position: absolute; left: -157px; top: 98px; }
```
FILE: chart.js
```js
(function () {
  var NS = 'http://www.w3.org/2000/svg';
  var HEIGHT = 504;

  function add(parent, name, attrs, text) {
    var el = document.createElementNS(NS, name);
    for (var key in attrs) el.setAttribute(key, attrs[key]);
    if (text !== undefined) el.textContent = text;
    parent.appendChild(el);
    return el;
  }
  function pct(y) { return (y / HEIGHT * 100).toFixed(3) + '%'; }

  var plot = add(document.getElementById('chart'), 'svg', { 'class': 'plot', x: 33, y: 10 });

  // A nested viewport whose origin follows a relative point of the plot
  function at(x, y) { return add(plot, 'svg', { 'class': 'marker', x: x, y: y }); }

  function row(y, label, zero) {
    y = Math.floor(y) + 0.5;
    add(plot, 'line', { 'class': zero ? 'zero-line' : 'grid', x1: 3, x2: '100%', y1: pct(y), y2: pct(y) });
    add(plot, 'line', { 'class': 'axis', x1: -2, x2: 0, y1: pct(y), y2: pct(y) });
    add(at(0, pct(y)), 'text', { 'class': 'tick-label', x: -4, y: 3 }, label);
  }

  var i;
  for (i = 21; i >= -4; i--) {
    row(289.5 - i * 13.14, i % 10 === 0 ? String(i * 3 / 10) : (i * 0.3).toFixed(2), i === 0);
  }
  for (i = 5; i >= -5; i--) {
    row(428.5 - i * 14.1, String(i * 4), i === 0);
  }
  for (i = 1; i <= 10; i++) {
    if (i < 10) add(plot, 'line', { 'class': 'grid', x1: i * 10 + '%', x2: i * 10 + '%', y1: 5, y2: '100%' });
    add(at(i * 10 + '%', '100%'), 'text', { 'class': 'time-label', x: 0, y: 13 }, (i / 10).toFixed(3));
  }

  add(plot, 'line', { 'class': 'axis', x1: 0, x2: '100%', y1: 0.5, y2: 0.5 });
  add(at(0, '100%'), 'path', { 'class': 'axis', d: 'M0 .5h1' });
  add(plot, 'rect', { fill: '#fff', x: 0, y: '100%', width: '100%', height: 1 });
  add(plot, 'line', { 'class': 'axis', x1: -33, x2: '100%', y1: pct(352.5), y2: pct(352.5) });
  add(plot, 'line', { 'class': 'axis', x1: 0.5, x2: 0.5, y1: 0, y2: '100%' });
  [[0, 6], [347, 358], [499, 504]].forEach(function (s) {
    add(plot, 'line', { stroke: '#800080', x1: 0.5, x2: 0.5, y1: pct(s[0]), y2: pct(s[1]) });
  });

  add(plot, 'text', { 'class': 'channel-label', fill: '#00ff00', x: 5, y: 22 }, '1 Датчик давления в цилиндре (Bar)');
  add(at(0, pct(352)), 'text', { 'class': 'channel-label', fill: '#3366ff', x: 5, y: 22 }, '4 Датчик синхронизации (В)');
  add(plot, 'circle', { fill: '#00ff00', cx: -26, cy: pct(289), r: 4 });

  var left = at(0, 0);
  add(left, 'path', { d: 'M-7-8H8L0.500 0z', fill: '#800080' });
  add(left, 'text', { 'class': 'flag', x: 0, y: -2 }, '1');

  var right = at('100%', 0);
  add(plot, 'line', { stroke: '#0000ff', 'stroke-width': 2, x1: '100%', x2: '100%', y1: 0, y2: '100%' });
  add(right, 'line', { stroke: '#fff', x1: 1.5, x2: 1.5, y1: 0, y2: '100%' });
  add(right, 'path', { d: 'M-7-8H8L0.500 0z', fill: '#0000ff' });
  add(right, 'text', { 'class': 'flag', x: 0, y: -2 }, '2');
  add(right, 'path', { d: 'M4 7h10L9 1z', fill: '#00ff00' });
  add(at('100%', pct(176)), 'path', { d: 'M4 0l5-5 5 5-5 5z', fill: '#00ff00' });
  add(at('100%', pct(349)), 'path', { d: 'M4-3h10L9 3z', fill: '#00ff00' });
})();
```
